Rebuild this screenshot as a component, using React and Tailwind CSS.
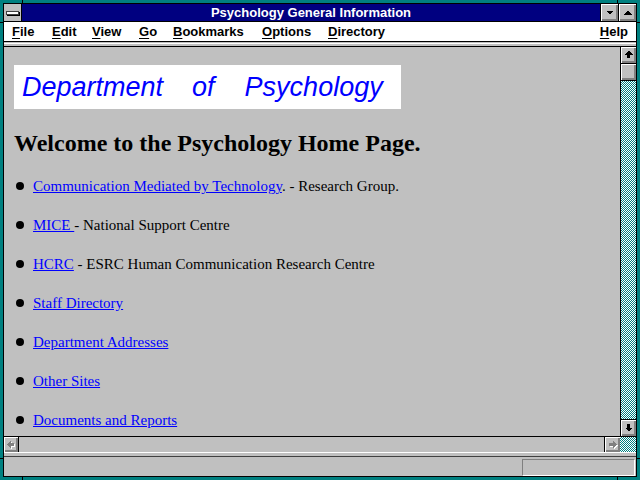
import React from 'react';

const sans = "font-['Liberation_Sans',Arial,sans-serif]";
const serif = "font-['Liberation_Serif','Times_New_Roman',serif]";
const raised = 'bg-[#c0c0c0] shadow-[inset_1px_1px_0_#fff,inset_-1px_-1px_0_#808080,inset_-2px_-2px_0_#808080]';
const checker = 'bg-[#60b0b0] bg-[image:repeating-conic-gradient(#008080_0_25%,#ffffff_0_50%)] bg-size-[2px_2px] [image-rendering:pixelated]';

function Arrow({ dir, disabled }) {
  const pts = {
    up: '4.5,0.5 8.5,4.5 6,4.5 6,8 3,8 3,4.5 0.5,4.5',
    down: '4.5,8.5 8.5,4.5 6,4.5 6,1 3,1 3,4.5 0.5,4.5',
    left: '0.5,4.5 4.5,0.5 4.5,3 8,3 8,6 4.5,6 4.5,8.5',
    right: '8.5,4.5 4.5,0.5 4.5,3 1,3 1,6 4.5,6 4.5,8.5',
  }[dir];
  return (
    <svg width="10" height="10" viewBox="0 0 10 10" shapeRendering="crispEdges">
      {disabled && <polygon points={pts} fill="#fff" transform="translate(1 1)" />}
      <polygon points={pts} fill={disabled ? '#808080' : '#000'} />
    </svg>
  );
}

function Tri({ up }) {
  return (
    <svg width="8" height="5" viewBox="0 0 8 5" shapeRendering="crispEdges">
      <polygon points={up ? '4,0.5 8,4.5 0,4.5' : '0,0.5 8,0.5 4,4.5'} fill="#000" />
    </svg>
  );
}

const menu = [
  ['F', 'ile', 'w-[40px]'],
  ['E', 'dit', 'w-[40px]'],
  ['V', 'iew', 'w-[47px]'],
  ['G', 'o', 'w-[34px]'],
  ['B', 'ookmarks', 'w-[89px]'],
  ['O', 'ptions', 'w-[66px]'],
  ['D', 'irectory', 'w-[80px]'],
];

function Item({ children }) {
  return (
    <li className="flex items-center h-[20px] leading-[20px]">
      <span className="ml-[12px] w-[8px] h-[8px] rounded-full bg-black shrink-0" />
      <span className="ml-[9px] whitespace-nowrap">{children}</span>
    </li>
  );
}

const A = ({ children }) => <a className="text-[#0000ff] underline">{children}</a>;

export default function App() {
  return (
    <div className="relative w-[640px] h-[480px] bg-[#008080] p-[3px] overflow-hidden">
      {/* resize marks on the frame */}
      <div className="absolute left-[22px] top-0 w-px h-[3px] bg-black" />
      <div className="absolute left-[617px] top-0 w-px h-[3px] bg-black" />
      <div className="absolute left-[22px] bottom-0 w-px h-[3px] bg-black" />
      <div className="absolute left-[617px] bottom-0 w-px h-[3px] bg-black" />
      <div className="absolute left-0 top-[22px] w-[3px] h-px bg-black" />
      <div className="absolute left-0 top-[458px] w-[3px] h-px bg-black" />
      <div className="absolute right-0 top-[22px] w-[3px] h-px bg-black" />
      <div className="absolute right-0 top-[458px] w-[3px] h-px bg-black" />

      <div className="w-full h-full border border-black flex flex-col bg-[#c0c0c0]">
        {/* title bar */}
        <div className="flex h-[18px] border-b border-black shrink-0">
          <div className="w-[18px] border-r border-black bg-[#c0c0c0] flex items-center justify-center">
            <div className="w-[13px] h-[4px] bg-white border border-[#404040] shadow-[1px_1px_0_#000]" />
          </div>
          <div className={`flex-1 bg-[#000080] text-white text-[13px] font-bold leading-[17px] text-center ${sans}`}>
            Psychology General Information
          </div>
          <div className={`w-[18px] border-l border-black flex items-center justify-center ${raised}`}>
            <Tri />
          </div>
          <div className={`w-[18px] border-l border-black flex items-center justify-center ${raised}`}>
            <Tri up />
          </div>
        </div>

        {/* menu bar */}
        <div className={`flex items-center h-[20px] bg-white border-b border-black pl-[8px] pr-[8px] text-[13px] font-bold text-black shrink-0 ${sans}`}>
          {menu.map(([k, rest, w]) => (
            <span key={k + rest} className={w}>
              <span className="underline underline-offset-2">{k}</span>
              {rest}
            </span>
          ))}
          <span className="ml-auto">
            <span className="underline underline-offset-2">H</span>elp
          </span>
        </div>

        {/* bevel strip */}
        <div className="h-[5px] bg-[#c0c0c0] flex flex-col shrink-0 border-b border-black">
          <div className="h-px bg-[#c0c0c0]" />
          <div className="h-px bg-white" />
        </div>

        {/* document + vertical scrollbar */}
        <div className="flex h-[389px] shrink-0">
          <div className={`w-[616px] bg-[#c0c0c0] text-black ${serif}`}>
            <div className="mt-[18px] ml-[10px] w-[387px] h-[44px] bg-white flex items-center pl-[8px]">
              <span className={`italic text-[27px] text-[#0000ff] leading-none whitespace-nowrap ${sans}`}>
                Department
                <span className="ml-[29px]">of</span>
                <span className="ml-[30px]">Psychology</span>
              </span>
            </div>
            <h1 className="mt-[20px] ml-[10px] text-[24px] leading-[28px] font-bold whitespace-nowrap">
              Welcome to the Psychology Home Page.
            </h1>
            <ul className="mt-[19px] flex flex-col gap-[19px] text-[15px]">
              <Item>
                <A>Communication Mediated by Technology</A>. - Research Group.
              </Item>
              <Item>
                <A>{'MICE '}</A>- National Support Centre
              </Item>
              <Item>
                <A>HCRC</A> - ESRC Human Communication Research Centre
              </Item>
              <Item>
                <A>Staff Directory</A>
              </Item>
              <Item>
                <A>Department Addresses</A>
              </Item>
              <Item>
                <A>Other Sites</A>
              </Item>
              <Item>
                <A>Documents and Reports</A>
              </Item>
            </ul>
          </div>
          <div className="w-[16px] border-l border-black flex flex-col">
            <div className={`h-[17px] border-b border-black flex items-center justify-center ${raised}`}>
              <Arrow dir="up" />
            </div>
            <div className={`h-[17px] border-b border-black ${raised}`} />
            <div className={`flex-1 ${checker}`} />
            <div className={`h-[17px] border-t border-black flex items-center justify-center ${raised}`}>
              <Arrow dir="down" />
            </div>
          </div>
        </div>

        {/* horizontal scrollbar */}
        <div className="flex h-[16px] border-t border-black shrink-0">
          <div className={`w-[15px] border-r border-black flex items-center justify-center ${raised}`}>
            <Arrow dir="left" disabled />
          </div>
          <div className="flex-1 bg-[#c0c0c0]" />
          <div className={`w-[16px] border-l border-black flex items-center justify-center ${raised}`}>
            <Arrow dir="right" disabled />
          </div>
          <div className={`w-[16px] ${checker}`} />
        </div>

        {/* status bar */}
        <div className="h-px bg-white shrink-0" />
        <div className="h-[3px] bg-[#c0c0c0] shrink-0" />
        <div className="h-px bg-[#404040] shrink-0" />
        <div className="flex-1 flex justify-end items-end pr-px bg-[#c0c0c0]">
          <div className="w-[113px] h-[17px] border-t border-l border-[#808080] border-b border-r border-b-white border-r-white" />
        </div>
      </div>
    </div>
  );
}
